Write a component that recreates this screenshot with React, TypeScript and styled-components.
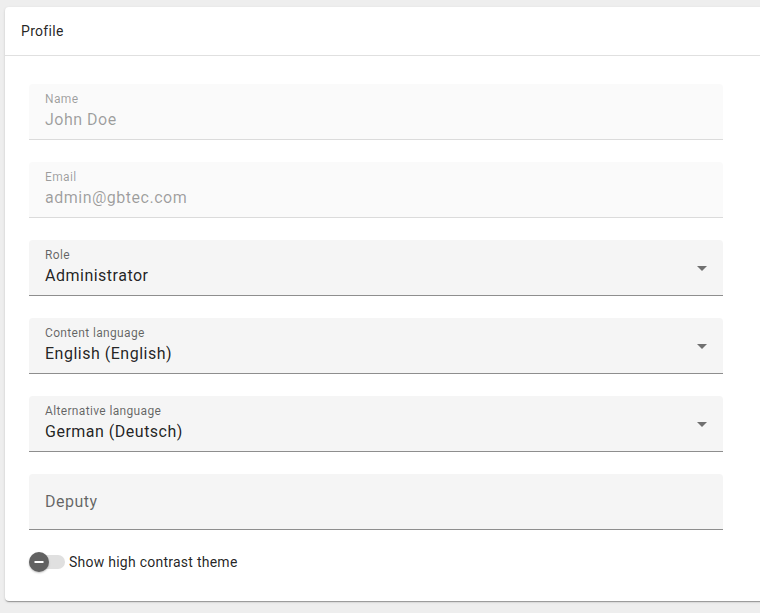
import React from "react";
import styled, { createGlobalStyle } from "styled-components";

const Global = createGlobalStyle`
  html, body { margin: 0; padding: 0; background: #eeeeee; }
  body { font-family: Roboto, "Liberation Sans", Arial, sans-serif; overflow: hidden; }
  * { box-sizing: border-box; }
`;

const Page = styled.div`
  padding: 7px 0 0 5px;
  width: 760px;
  height: 613px;
  overflow: hidden;
`;

const Card = styled.section`
  width: 780px;
  background: #fff;
  border-radius: 4px;
  box-shadow: 0 2px 1px -1px rgba(0,0,0,0.2), 0 1px 1px 0 rgba(0,0,0,0.14), 0 1px 3px 0 rgba(0,0,0,0.12);
`;

const Header = styled.header`
  height: 49px;
  display: flex;
  align-items: center;
  padding: 0 16px 1px;
  border-bottom: 1px solid #e0e0e0;
  font-size: 14px;
  letter-spacing: 0.3px;
  color: rgba(0,0,0,0.87);
`;

const Body = styled.div`
  padding: 28px 24px 29px;
  display: flex;
  flex-direction: column;
  gap: 22px;
`;

const Field = styled.div<{ $disabled?: boolean }>`
  position: relative;
  width: 694px;
  height: 56px;
  border-radius: 4px 4px 0 0;
  background: ${(p) => (p.$disabled ? "#fafafa" : "#f5f5f5")};
  border-bottom: 1px solid ${(p) => (p.$disabled ? "rgba(0,0,0,0.12)" : "rgba(0,0,0,0.42)")};
  padding: 8px 16px 0;
  display: flex;
  flex-direction: column;
`;

const Label = styled.span<{ $disabled?: boolean }>`
  font-size: 12px;
  line-height: 14px;
  letter-spacing: 0.35px;
  color: ${(p) => (p.$disabled ? "rgba(0,0,0,0.38)" : "rgba(0,0,0,0.6)")};
`;

const Value = styled.span<{ $disabled?: boolean }>`
  margin-top: 4px;
  font-size: 16px;
  line-height: 20px;
  letter-spacing: 0.5px;
  color: ${(p) => (p.$disabled ? "rgba(0,0,0,0.38)" : "rgba(0,0,0,0.87)")};
`;

const Placeholder = styled.span`
  margin-top: 10px;
  font-size: 16px;
  line-height: 20px;
  letter-spacing: 0.5px;
  color: rgba(0,0,0,0.6);
`;

const Arrow = styled.span`
  position: absolute;
  right: 16px;
  top: 26px;
  width: 0;
  height: 0;
  border-left: 5px solid transparent;
  border-right: 5px solid transparent;
  border-top: 5px solid rgba(0,0,0,0.54);
`;

const ToggleRow = styled.label`
  display: flex;
  align-items: center;
  height: 20px;
  font-size: 14px;
  letter-spacing: 0.25px;
  color: rgba(0,0,0,0.87);
`;

const Track = styled.span`
  position: relative;
  width: 36px;
  height: 14px;
  border-radius: 7px;
  background: #e0e0e0;
  margin-right: 4px;
`;

const Thumb = styled.span`
  position: absolute;
  left: 0;
  top: -3px;
  width: 20px;
  height: 20px;
  border-radius: 50%;
  background: #616161;
  display: flex;
  align-items: center;
  justify-content: center;
  box-shadow: 0 1px 2px rgba(0,0,0,0.25);
`;

type F = { label: string; value?: string; disabled?: boolean; select?: boolean };

const fields: F[] = [
  { label: "Name", value: "John Doe", disabled: true },
  { label: "Email", value: "admin@gbtec.com", disabled: true },
  { label: "Role", value: "Administrator", select: true },
  { label: "Content language", value: "English (English)", select: true },
  { label: "Alternative language", value: "German (Deutsch)", select: true },
];

export default function App() {
  return (
    <>
      <Global />
      <Page>
        <Card>
          <Header>Profile</Header>
          <Body>
            {fields.map((f) => (
              <Field key={f.label} $disabled={f.disabled}>
                <Label $disabled={f.disabled}>{f.label}</Label>
                <Value $disabled={f.disabled}>{f.value}</Value>
                {f.select && <Arrow />}
              </Field>
            ))}
            <Field>
              <Placeholder>Deputy</Placeholder>
            </Field>
            <ToggleRow>
              <Track>
                <Thumb>
                  <svg width="12" height="12" viewBox="0 0 12 12">
                    <rect x="1.5" y="5" width="9" height="2" fill="#fff" />
                  </svg>
                </Thumb>
              </Track>
              Show high contrast theme
            </ToggleRow>
          </Body>
        </Card>
      </Page>
    </>
  );
}
